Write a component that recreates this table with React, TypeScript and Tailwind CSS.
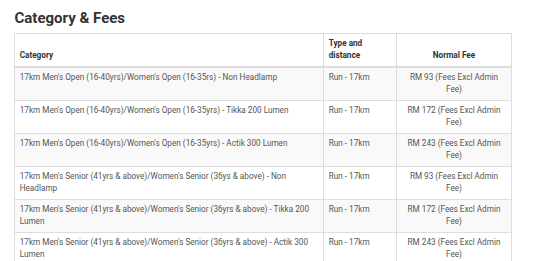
import React from "react";

const rows = [
  ["17km Men's Open (16-40yrs)/Women's Open (16-35rs) - Non Headlamp", "RM 93 (Fees Excl Admin Fee)"],
  ["17km Men's Open (16-40yrs)/Women's Open (16-35yrs) - Tikka 200 Lumen", "RM 172 (Fees Excl Admin Fee)"],
  ["17km Men's Open (16-40yrs)/Women's Open (16-35yrs) - Actik 300 Lumen", "RM 243 (Fees Excl Admin Fee)"],
  ["17km Men's Senior (41yrs & above)/Women's Senior (36ys & above) - Non Headlamp", "RM 93 (Fees Excl Admin Fee)"],
  ["17km Men's Senior (41yrs & above)/Women's Senior (36yrs & above) - Tikka 200 Lumen", "RM 172 (Fees Excl Admin Fee)"],
  ["17km Men's Senior (41yrs & above)/Women's Senior (36yrs & above) - Actik 300 Lumen", "RM 243 (Fees Excl Admin Fee)"],
];

export default function App() {
  return (
    <div className="w-[533px] h-[261px] overflow-hidden bg-white pl-[14px] pt-[8px]" style={{ fontFamily: "Roboto, 'Liberation Sans', sans-serif" }}>
      <h2 className="text-[15px] leading-[20px] font-bold text-[#333] mb-[4.8px] pl-[0.5px]">Category &amp; Fees</h2>
      <table className="w-[497px] border-collapse border border-[#ddd] text-[8.2px] leading-[11.7px] table-fixed">
        <colgroup>
          <col className="w-[309px]" />
          <col className="w-[73px]" />
          <col className="w-[115px]" />
        </colgroup>
        <thead>
          <tr className="bg-white">
            <th className="border border-[#ddd] border-b-2 px-[4.7px] py-[4.3px] text-left align-bottom font-bold text-[#333]">Category</th>
            <th className="border border-[#ddd] border-b-2 px-[4.7px] py-[4.3px] text-left align-bottom font-bold text-[#333]">Type and distance</th>
            <th className="border border-[#ddd] border-b-2 px-[4.7px] py-[4.3px] text-center align-bottom font-bold text-[#333]">Normal Fee</th>
          </tr>
        </thead>
        <tbody>
          {rows.map((r, i) => (
            <tr key={i} className={i % 2 === 0 ? "bg-[#f9f9f9]" : "bg-white"}>
              <td className="border border-[#ddd] px-[4.7px] py-[4.3px] align-top text-[#555]">{r[0]}</td>
              <td className="border border-[#ddd] px-[4.7px] py-[4.3px] align-top text-[#555]">Run - 17km</td>
              <td className="border border-[#ddd] px-[4.7px] py-[4.3px] align-top text-center text-[#555]">{r[1]}</td>
            </tr>
          ))}
        </tbody>
      </table>
    </div>
  );
}
